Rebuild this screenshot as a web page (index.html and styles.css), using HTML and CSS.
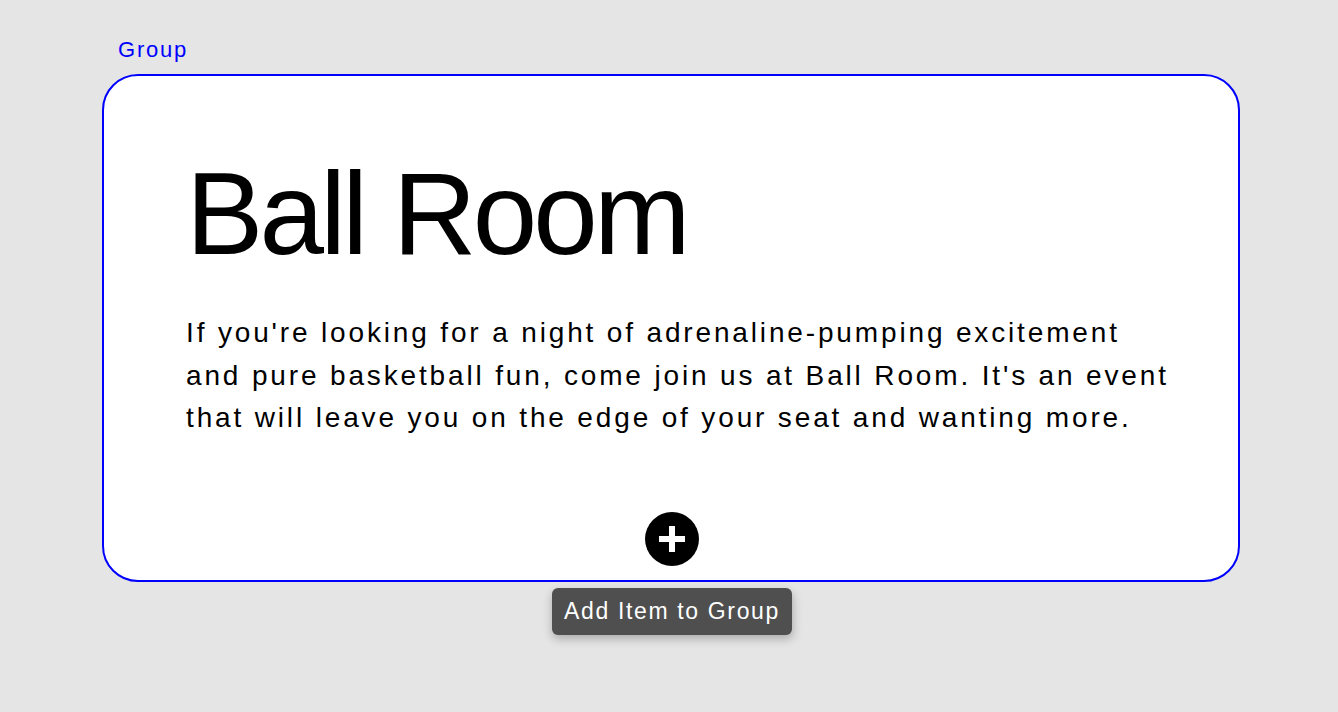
FILE: index.html
```html
<!DOCTYPE html>
<html lang="en">
<head>
<meta charset="utf-8">
<title>Ball Room</title>
<link rel="stylesheet" href="styles.css">
</head>
<body>
<div class="canvas">
  <div class="group-label">Group</div>
  <section class="group-card">
    <h1 class="title">Ball Room</h1>
    <p class="desc">If you're looking for a night of adrenaline-pumping excitement and pure basketball fun, come join us at Ball Room. It's an event that will leave you on the edge of your seat and wanting more.</p>
    <button class="add-btn" aria-label="Add Item to Group">
      <svg width="54" height="54" viewBox="0 0 54 54">
        <circle cx="27" cy="27" r="27" fill="#000"/>
        <rect x="14" y="24" width="26" height="6" fill="#fff"/>
        <rect x="24" y="14" width="6" height="26" fill="#fff"/>
      </svg>
    </button>
    <div class="tooltip">Add Item to Group</div>
  </section>
</div>
</body>
</html>
```

FILE: styles.css
```css
html, body {
  margin: 0;
  padding: 0;
}
body {
  background: #e5e5e5;
  font-family: "Liberation Sans", Arial, sans-serif;
  width: 1338px;
  height: 712px;
  overflow: hidden;
}
.canvas {
  padding: 38px 0 0 102px;
}
.group-label {
  margin-left: 16px;
  font-size: 22px;
  line-height: 24px;
  letter-spacing: 1.8px;
  color: #0000ff;
  margin-bottom: 12px;
}
.group-card {
  position: relative;
  box-sizing: border-box;
  width: 1138px;
  height: 508px;
  border: 2px solid #0000ff;
  border-radius: 36px;
  background: #fff;
  display: flex;
  flex-direction: column;
  padding: 80px 82px 14px 82px;
}
.title {
  margin: 0;
  font-size: 116px;
  line-height: 116px;
  font-weight: 400;
  letter-spacing: -3.8px;
  color: #000;
}
.desc {
  margin: 40px 0 0 0;
  font-size: 28px;
  line-height: 42.5px;
  letter-spacing: 2.85px;
  color: #000;
  width: 985px;
}
.add-btn {
  margin-top: auto;
  margin-left: 2px;
  align-self: center;
  border: 0;
  padding: 0;
  background: none;
  width: 54px;
  height: 54px;
  display: block;
  cursor: pointer;
}
.add-btn svg {
  display: block;
}
.tooltip {
  position: absolute;
  top: calc(100% + 8px);
  left: 50%;
  margin-left: 1px;
  transform: translateX(-50%);
  background: #4f4f4f;
  color: #fff;
  font-size: 23px;
  line-height: 47px;
  padding: 0 12px;
  border-radius: 6px;
  white-space: nowrap;
  letter-spacing: 1.65px;
  box-shadow: 0 4px 10px rgba(0, 0, 0, 0.25);
}
```
